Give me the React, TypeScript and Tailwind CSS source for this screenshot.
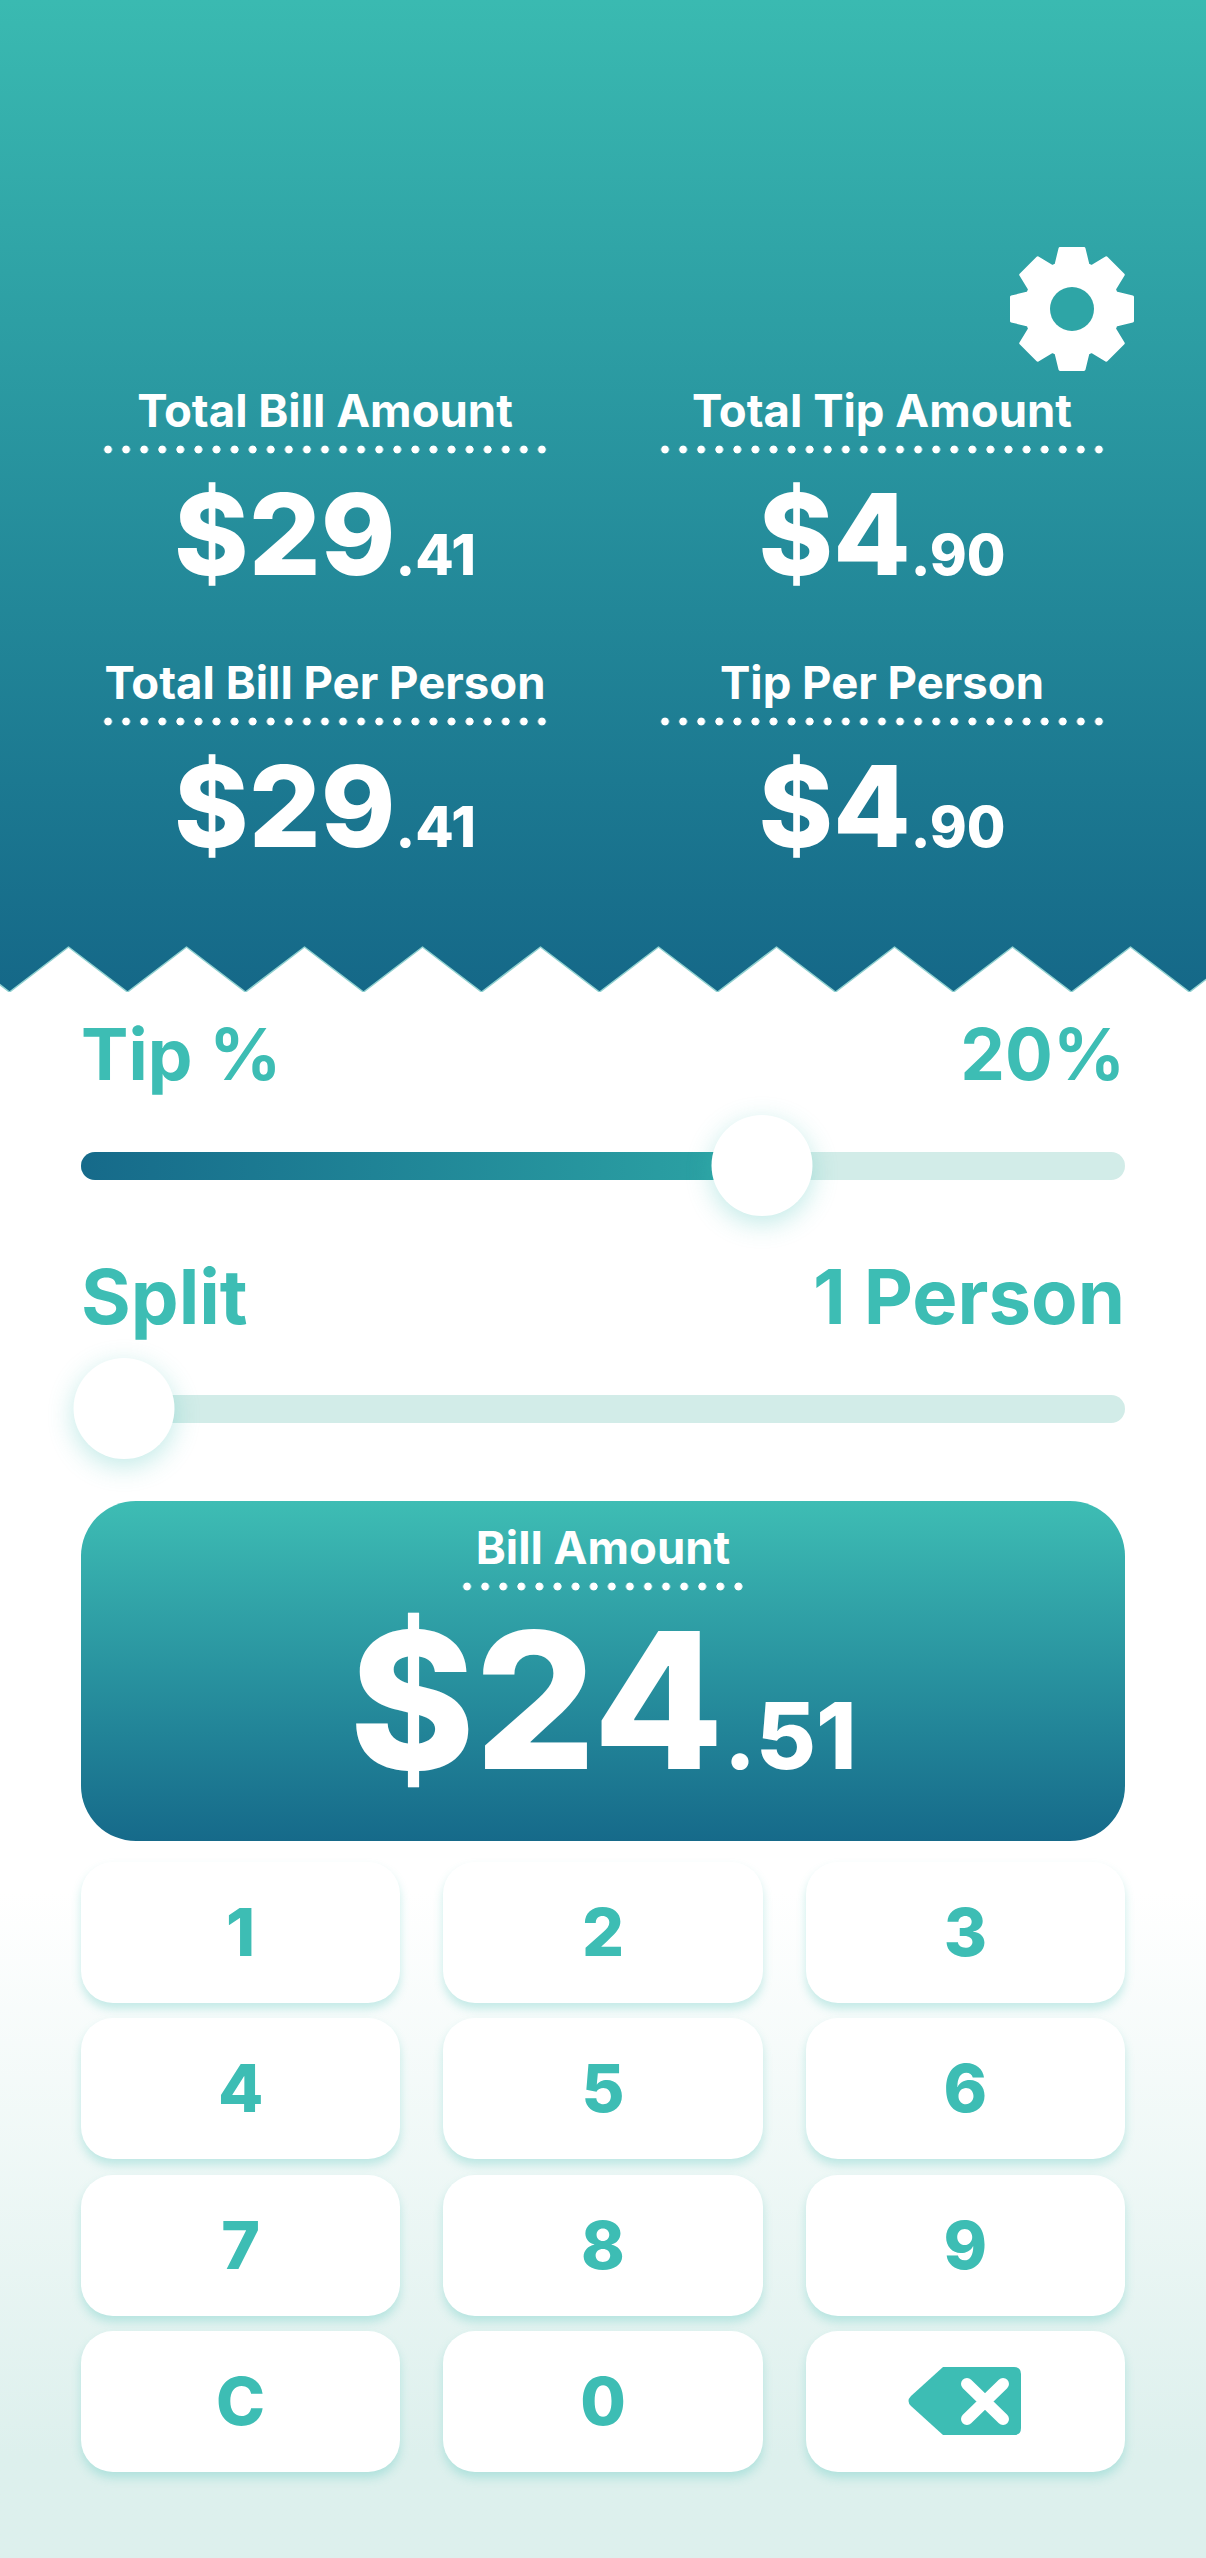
const font = { fontFamily: 'Inter, "Liberation Sans", sans-serif' };

function zigzagPath() {
  const parts: string[] = ["M-120 1000", "L-108.5 992"];
  for (let i = -1; i < 12; i++) {
    const valley = 9.5 + 118 * i;
    parts.push(`L${valley} 992 L${valley + 59} 947`);
  }
  parts.push("L1300 992 L1300 1000 Z");
  return parts.join(" ");
}

function gearPath() {
  const cx = 64;
  const cy = 64;
  const pts: string[] = [];
  for (let i = 0; i < 8; i++) {
    const a = (i * Math.PI) / 4 - Math.PI / 2;
    const at = (r: number, off: number) => {
      const x = cx + r * Math.cos(a) - off * Math.sin(a);
      const y = cy + r * Math.sin(a) + off * Math.cos(a);
      return `${x.toFixed(2)} ${y.toFixed(2)}`;
    };
    pts.push(at(44, -16), at(60.5, -12), at(60.5, 12), at(44, 16));
  }
  return `M${pts.join(" L")} Z`;
}

function Gear() {
  return (
    <svg width="128" height="128" viewBox="0 0 128 128" className="block">
      <path d={gearPath()} fill="#fff" stroke="#fff" strokeWidth="3" strokeLinejoin="round" />
      <circle cx="64" cy="64" r="22" fill="#2ea5a6" />
    </svg>
  );
}

function Stat({ label, whole, cents }: { label: string; whole: string; cents: string }) {
  return (
    <div className="flex flex-col items-center">
      <div className="h-[50px] text-[45.5px] leading-[50px] font-bold text-white whitespace-nowrap">{label}</div>
      <div className="mt-[9px] h-[9px] w-[452px] bg-[radial-gradient(circle,#ffffff_3.6px,transparent_4.3px)] bg-[length:18.08px_9px] bg-repeat-x" />
      <div className="mt-[25px] h-[110px] leading-[110px] text-white font-extrabold whitespace-nowrap">
        <span className="text-[113px]">{whole}</span>
        <span className="text-[56px]">{cents}</span>
      </div>
    </div>
  );
}

function Slider({ fill }: { fill: number }) {
  return (
    <div className="relative h-[28px] rounded-full bg-[#d2ece8]">
      {fill > 0 && (
        <div
          className="h-full rounded-l-full bg-gradient-to-r from-[#166a8a] to-[#2da5a5]"
          style={{ width: `${fill}px` }}
        />
      )}
      <div
        className="absolute top-[-37px] h-[101px] w-[101px] -translate-x-1/2 rounded-full bg-white shadow-[0_7px_26px_rgba(61,189,180,0.32)]"
        style={{ left: `${Math.max(fill, 43)}px` }}
      />
    </div>
  );
}

function Key({ children }: { children: React.ReactNode }) {
  return (
    <button className="flex h-[141px] items-center justify-center rounded-[32px] bg-white text-[66px] font-extrabold text-[#3dbdb4] shadow-[0_6px_10px_rgba(61,189,180,0.28)]">
      {children}
    </button>
  );
}

function Backspace() {
  return (
    <svg width="114" height="68" viewBox="0 0 114 68" className="block">
      <path
        d="M35 0 L106 0 Q113 0 113 7 L113 61 Q113 68 106 68 L35 68 L3 39 Q-2 34 3 29 Z"
        fill="#3dbdb4"
      />
      <path d="M59 17 L95 52 M95 17 L59 52" stroke="#fff" strokeWidth="12" strokeLinecap="round" />
    </svg>
  );
}

export default function App() {
  const keys = ["1", "2", "3", "4", "5", "6", "7", "8", "9", "C", "0"];
  return (
    <div
      className="h-[2558px] w-[1206px] overflow-hidden bg-gradient-to-b from-white from-[74%] to-[#ddf0ed] to-[96%]"
      style={font}
    >
      <header className="relative h-[992px] bg-gradient-to-b from-[#3abab1] to-[#156888] pt-[245px]">
        <div className="flex justify-end pr-[70px]">
          <Gear />
        </div>
        <div className="mt-[13px] grid grid-cols-[452px_452px] gap-x-[105px] gap-y-[69px] px-[99px]">
          <Stat label="Total Bill Amount" whole="$29" cents=".41" />
          <Stat label="Total Tip Amount" whole="$4" cents=".90" />
          <Stat label="Total Bill Per Person" whole="$29" cents=".41" />
          <Stat label="Tip Per Person" whole="$4" cents=".90" />
        </div>
        <svg
          width="1206"
          height="52"
          viewBox="0 940 1206 52"
          className="absolute bottom-0 left-0 block"
        >
          <path d={zigzagPath()} fill="#fff" stroke="#8fd0cf" strokeWidth="1.5" strokeLinejoin="round" />
        </svg>
      </header>

      <main className="flex flex-col px-[81px]">
        <div className="mt-[17px] flex h-[90px] items-center justify-between text-[71px] font-bold text-[#3dbdb4]">
          <span>Tip %</span>
          <span>20%</span>
        </div>
        <div className="mt-[53px]">
          <Slider fill={681} />
        </div>
        <div className="mt-[71px] flex h-[90px] items-center justify-between text-[76px] font-bold text-[#3dbdb4]">
          <span>Split</span>
          <span>1 Person</span>
        </div>
        <div className="mt-[54px]">
          <Slider fill={0} />
        </div>

        <section className="mt-[78px] flex h-[340px] flex-col items-center rounded-[55px] bg-gradient-to-b from-[#3ebdb4] to-[#166a8a]">
          <div className="mt-[22px] h-[50px] text-[45.5px] leading-[50px] font-bold text-white">Bill Amount</div>
          <div className="mt-[9px] h-[9px] w-[290px] bg-[radial-gradient(circle,#ffffff_3.6px,transparent_4.3px)] bg-[length:18.1px_9px] bg-repeat-x" />
          <div className="mt-[24px] h-[170px] leading-[170px] font-extrabold text-white whitespace-nowrap">
            <span className="text-[190px]">$24</span>
            <span className="text-[92px]">.51</span>
          </div>
        </section>

        <div className="mt-[21px] grid grid-cols-3 gap-x-[43px] gap-y-[15.33px]">
          {keys.map((k) => (
            <Key key={k}>{k}</Key>
          ))}
          <Key>
            <Backspace />
          </Key>
        </div>
      </main>
    </div>
  );
}
